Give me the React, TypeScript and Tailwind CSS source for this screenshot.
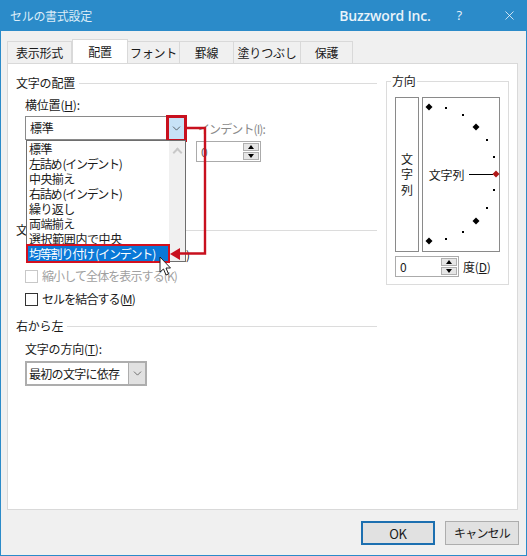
import { ChevronDown, X } from 'lucide-react'

const alignOptions = [
  { label: '標準', cls: 'tracking-[-0.6px]' },
  { label: '左詰め (インデント)', cls: 'tracking-[-1.3px]' },
  { label: '中央揃え', cls: 'tracking-[-0.6px]' },
  { label: '右詰め (インデント)', cls: 'tracking-[-1.3px]' },
  { label: '繰り返し', cls: 'tracking-[-0.6px]' },
  { label: '両端揃え', cls: 'tracking-[-0.6px]' },
  { label: '選択範囲内で中央', cls: 'tracking-[-0.4px]' },
]

const tabs = [
  { label: '表示形式', cls: 'w-[65px]' },
  { label: '配置', cls: 'w-[56px]' },
  { label: 'フォント', cls: 'w-[52px]' },
  { label: '罫線', cls: 'w-[54px]' },
  { label: '塗りつぶし', cls: 'w-[67px]' },
  { label: '保護', cls: 'w-[52px]' },
]

function Spin({ value, className }: { value: string; className: string }) {
  return (
    <div className={`flex items-stretch justify-between bg-white border border-[#ababab] pl-1 pr-[1px] py-[1px] ${className}`}>
      <span className="leading-[18px]">{value}</span>
      <div className="flex flex-col w-[16px] gap-[1px]">
        <div className="flex-1 bg-[#e6e6e6] border border-[#b0b0b0] flex items-center justify-center">
          <div className="w-0 h-0 border-x-[3px] border-x-transparent border-b-[4px] border-b-black" />
        </div>
        <div className="flex-1 bg-[#e6e6e6] border border-[#b0b0b0] flex items-center justify-center">
          <div className="w-0 h-0 border-x-[3px] border-x-transparent border-t-[4px] border-t-black" />
        </div>
      </div>
    </div>
  )
}

function SectionHead({ label, className }: { label: string; className: string }) {
  return (
    <div className={`flex items-center gap-1 ${className}`}>
      <span className="leading-[18px]">{label}</span>
      <div className="flex-1 h-px bg-[#dcdcdc]" />
    </div>
  )
}

function Dot({ x, y, big, red }: { x: number; y: number; big?: boolean; red?: boolean }) {
  if (big) {
    return <polygon points={`${x},${y - 3.5} ${x + 3.5},${y} ${x},${y + 3.5} ${x - 3.5},${y}`} fill={red ? '#b01818' : '#000'} />
  }
  return <rect x={x - 1} y={y - 1} width="2" height="2" fill="#000" />
}

export default function App() {
  return (
    <div
      className="relative w-[527px] h-[556px] overflow-hidden bg-[#f0f0f0] border border-[#2b8bc9] border-t-0 text-[12px] tracking-[-0.2px] text-[#1a1a1a] flex flex-col"
      style={{ fontFamily: '"Noto Sans CJK JP", "Noto Sans", sans-serif' }}
    >
      {/* title bar */}
      <div className="h-[31px] shrink-0 -mx-px bg-[#2b8bc9] flex items-center text-white">
        <span className="ml-[10px] text-[12px] tracking-[-0.3px] text-[#dcedf8]">セルの書式設定</span>
        <span className="ml-auto mr-[26px] text-[14px] font-semibold tracking-[-0.2px] text-[#e8f3fa]" style={{ fontFamily: '"Open Sans", sans-serif' }}>
          Buzzword Inc.
        </span>
        <span className="mr-[40px] text-[13px] text-[#e8f3fa]" style={{ fontFamily: '"Open Sans", sans-serif' }}>?</span>
        <X size={15} strokeWidth={1.2} className="mr-[10px] text-white" />
      </div>

      {/* tabs */}
      <div className="flex items-end ml-[6px] mt-[9px] h-[23px] relative z-10 shrink-0">
        {tabs.map((tab) => (
          <div
            key={tab.label}
            className={
              tab.label === '配置'
                ? `${tab.cls} h-[24px] bg-white border border-b-0 border-[#d9d9d9] flex items-center justify-center leading-none`
                : `${tab.cls} h-[22px] bg-[#f0f0f0] border border-l-0 first:border-l border-b-0 border-[#d9d9d9] flex items-center justify-center leading-none`
            }
          >
            {tab.label}
          </div>
        ))}
      </div>

      {/* panel */}
      <div className="ml-[6px] mr-[8px] h-[447px] shrink-0 bg-white border border-[#d9d9d9] flex">
        <div className="w-[369px] pl-[8px] shrink-0">
          <SectionHead label="文字の配置" className="mt-[10px]" />
          <div className="ml-[9px] mt-[4px] leading-[18px]">
            横位置(<span className="underline">H</span>):
          </div>
          <div className="ml-[9px] mt-[2px] w-[160px] h-[24px] bg-white border border-[#8a8a8a] flex items-center pl-1">
            標準
          </div>

          {/* only the first letter of this heading shows beside the open list */}
          <SectionHead label="文" className="mt-[81px]" />
          <div className="ml-[9px] mt-[28px] flex items-center gap-[4px] text-[#a0a0a0] h-[18px]">
            <div className="w-[13px] h-[13px] border border-[#c8c8c8] bg-white" />
            <span className="tracking-[-0.9px]">縮小して全体を表示する(K)</span>
          </div>
          <div className="ml-[9px] mt-[5px] flex items-center gap-[4px] h-[18px]">
            <div className="w-[13px] h-[13px] border border-[#333] bg-white" />
            <span className="tracking-[-0.9px]">
              セルを結合する(<span className="underline">M</span>)
            </span>
          </div>
          <SectionHead label="右から左" className="mt-[9px]" />
          <div className="ml-[9px] mt-[5px] leading-[18px]">
            文字の方向(<span className="underline">T</span>):
          </div>
          <div className="ml-[9px] mt-[3px] w-[122px] h-[25px] bg-white border-2 border-[#adadad] flex items-center pl-[2px]">
            <span className="flex-1 whitespace-nowrap tracking-[-0.7px]">最初の文字に依存</span>
            <div className="w-[17px] h-full bg-[#e1e1e1] border-l border-[#adadad] flex items-center justify-center">
              <ChevronDown size={13} strokeWidth={1.2} className="text-[#333]" />
            </div>
          </div>
        </div>

        {/* orientation */}
        <div className="ml-[9px] mt-[17px] w-[123px] h-[204px] border border-[#dcdcdc] relative px-[8px] pt-[15px]">
          <span className="absolute left-[4px] -top-[10px] bg-white px-[1px] leading-[18px]">方向</span>
          <div className="flex gap-[3px] h-[155px]">
            <div className="w-[24px] border border-[#8a8a8a] flex flex-col items-center justify-center leading-[15.5px] pb-px">
              <span>文</span>
              <span>字</span>
              <span>列</span>
            </div>
            <div className="w-[79px] border border-[#8a8a8a] relative">
              <svg width="77" height="153" className="absolute left-0 top-0">
                <Dot x={6} y={9} big />
                <Dot x={23} y={10} />
                <Dot x={40} y={17} />
                <Dot x={53} y={29} big />
                <Dot x={64} y={42} />
                <Dot x={71} y={59} />
                <Dot x={71} y={92} />
                <Dot x={64} y={110} />
                <Dot x={53} y={123} big />
                <Dot x={40} y={134} />
                <Dot x={23} y={141} />
                <Dot x={6} y={143} big />
                <line x1="46" y1="76.5" x2="70" y2="76.5" stroke="#000" strokeWidth="1" />
                <Dot x={73} y={76} big red />
              </svg>
              <span className="absolute left-[6px] top-[68px] leading-[18px]">文字列</span>
            </div>
          </div>
          <div className="flex items-center gap-[4px] mt-[4px]">
            <Spin value="0" className="w-[64px] h-[21px]" />
            <span>
              度(<span className="underline">D</span>)
            </span>
          </div>
        </div>
      </div>

      {/* buttons */}
      <div className="flex justify-end gap-[10px] mr-[7px] mt-[11px]">
        <button type="button" className="w-[74px] h-[24px] bg-[#e1e1e1] border-2 border-[#1c6fb0] leading-none text-[13px]">
          OK
        </button>
        <button type="button" className="w-[74px] h-[24px] bg-[#e1e1e1] border border-[#adadad] leading-none tracking-[-0.8px]">
          キャンセル
        </button>
      </div>

      {/* indent control, partly under the annotation */}
      <div className="absolute left-[197px] top-[120px] leading-[18px] text-[#8a8a8a] tracking-[-0.9px]">インデント(I):</div>
      <Spin value="0" className="absolute left-[195px] top-[141px] w-[65px] h-[21px] text-[#666]" />

      {/* open combobox button */}
      <div className="absolute left-[165px] top-[115px] w-[21px] h-[27px] bg-[#c7e2f6] border-[3px] border-[#c8101e] flex items-center justify-center">
        <ChevronDown size={13} strokeWidth={1.2} className="text-[#222]" />
      </div>

      {/* open dropdown list */}
      <div className="absolute left-[25px] top-[140px] w-[160px] h-[122px] bg-white border border-[#6e6e6e] flex leading-[15px]">
        <div className="flex-1 pl-[2px] whitespace-nowrap overflow-hidden">
          {alignOptions.map((opt) => (
            <div key={opt.label} className={`h-[15px] ${opt.cls}`}>{opt.label}</div>
          ))}
        </div>
        <div className="w-[16px] bg-[#f0f0f0] flex justify-center pt-[6px]">
          <div className="w-[7px] h-[7px] border-l-2 border-t-2 border-[#c8c8c8] rotate-45 mt-[2px]" />
        </div>
      </div>
      <div className="absolute left-[25px] top-[244px] w-[144px] h-[19px] bg-[#0a78d7] border-[2px] border-[#d4101e] text-white flex items-center pl-[1px] whitespace-nowrap leading-none tracking-[-1.2px]">
        均等割り付け (インデント)
      </div>
      <span className="absolute left-[185px] top-[246px] leading-[18px]">)</span>

      {/* annotation arrow */}
      <svg width="527" height="556" className="absolute left-0 top-0 pointer-events-none">
        <polyline points="186,128 204,128 204,253.5 178,253.5" fill="none" stroke="#c8101e" strokeWidth="2.4" />
        <polygon points="169,254 179,248 179,260" fill="#c8101e" />
        <path d="M159 257 L159 272 L162.5 269 L165 275 L167.5 274 L165 268 L169.5 268 Z" fill="#fff" stroke="#222" strokeWidth="1" />
      </svg>
    </div>
  )
}
